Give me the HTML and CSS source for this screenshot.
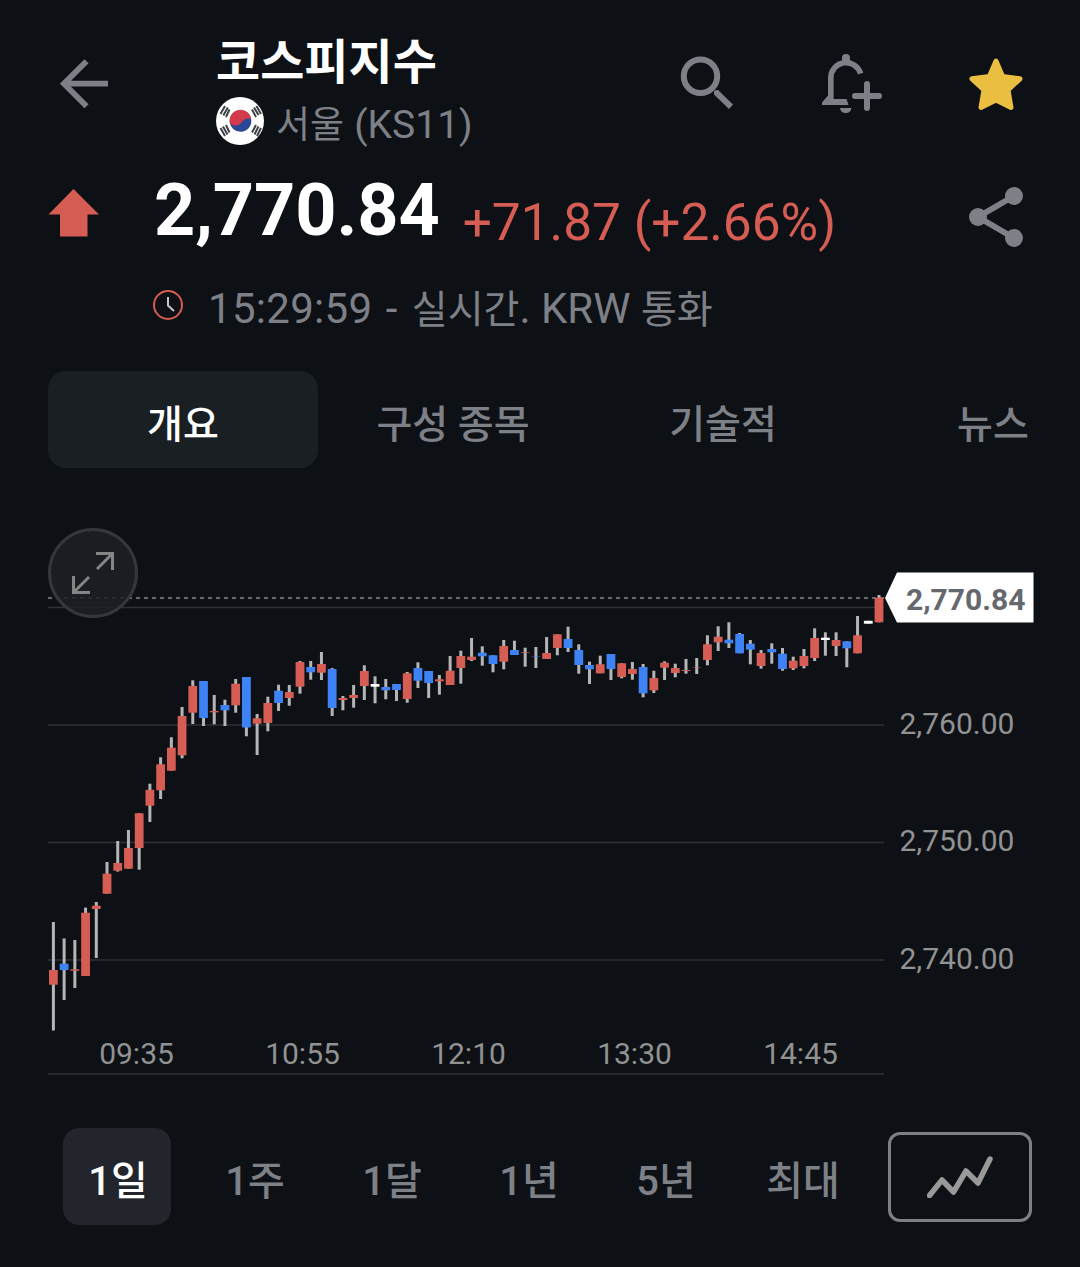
FILE: index.html
```html
<!DOCTYPE html>
<html lang="ko">
<head>
    <meta charset="UTF-8">
    <meta name="viewport" content="width=device-width, initial-scale=1.0">
    <title>코스피지수</title>
    <link rel="stylesheet" href="styles.css">
</head>
<body>
    <!-- 상단 바 -->
    <header class="header">
        <svg class="icon-back" viewBox="0 0 50 50">
            <path d="M48 24.7H5M26.500 2.200 4 24.700 26.500 47.200" fill="none" stroke="#7d8087" stroke-width="5.800"/>
        </svg>
        <div class="title-box">
            <h1>코스피지수</h1>
            <div class="market">
                <svg class="flag" viewBox="0 0 48 48">
                    <circle cx="24" cy="24" r="24" fill="#fff"/>
                    <g transform="rotate(-3 24 24)">
                        <circle cx="24.500" cy="24" r="10.800" fill="#2b4795"/>
                        <path d="M13.900 26A10.800 10.800 0 1 1 35.200 23C32 21 28 22 25.500 25.500S17 29 13.900 26Z" fill="#d33a4b"/>
                    </g>
                    <g stroke="#3f4246" stroke-width="2">
                        <path d="M4.500 17 9 9M7.300 18.500 11.800 10.500M10 20 13.500 12.500"/>
                        <path d="M36 12.500 40 20M38 10.500 42.500 18M40.500 9 45 17"/>
                        <path d="M4.500 31 9 39M7 29.500 11.500 37.500M10 28 13.500 35.500"/>
                        <path d="M36 35.500 40 28M38.500 37.500 42.500 29.500M41 39 45 31"/>
                    </g>
                </svg>
                <span class="market-name">서울 <span class="symbol">(KS11)</span></span>
            </div>
        </div>
        <div class="actions">
            <svg class="icon-search" viewBox="0 0 54 54">
                <circle cx="20.500" cy="20.300" r="16.700" fill="none" stroke="#7d8087" stroke-width="6"/>
                <path d="M34 35.500Q34.500 33.500 38 34L53 48.500 49 53 34.500 39Q33.500 37 34 35.500Z" fill="#7d8087"/>
            </svg>
            <svg class="icon-bell" viewBox="0 0 60 60">
                <path d="M8.800 47V24A15.200 15.200 0 0 1 38.600 19.600" fill="none" stroke="#7d8087" stroke-width="5.600"/>
                <path d="M20 9V4a4 4 0 0 1 8 0V9ZM18 54H29.500A5.800 5.800 0 0 1 18 54Z" fill="#7d8087"/>
                <path d="M6 41.500 11.600 45H24.500L26.500 51H0V48.500Z" fill="#7d8087"/>
                <path d="M45 30V54M33 42H57" fill="none" stroke="#7d8087" stroke-width="6" stroke-linecap="round"/>
            </svg>
            <svg class="icon-star" viewBox="0 0 54 54">
                <path d="M27 3 33.600 18.500 51 20.800 39 32 42 49.500 27 42 12 49.500 15 32 3 20.800 20.400 18.500Z" fill="#eabe41" stroke="#eabe41" stroke-width="5" stroke-linejoin="round"/>
            </svg>
        </div>
    </header>

    <!-- 현재가 -->
    <section class="quote">
        <svg class="icon-up" viewBox="0 0 50 48">
            <path d="M25 0 50.500 25.500H39V47.500H11.500V25.500H0Z" fill="#d65d53"/>
        </svg>
        <span class="price">2,770.84</span>
        <span class="change">+71.87 (+2.66%)</span>
        <svg class="icon-share" viewBox="0 0 54 60">
            <path d="M45 9 9 30 45 51" fill="none" stroke="#7d8087" stroke-width="6"/>
            <circle cx="45" cy="9" r="9" fill="#7d8087"/>
            <circle cx="9" cy="30" r="9" fill="#7d8087"/>
            <circle cx="45" cy="51" r="9" fill="#7d8087"/>
        </svg>
    </section>
    <div class="status">
        <svg class="icon-clock" viewBox="0 0 30 30">
            <circle cx="15" cy="15" r="14" fill="none" stroke="#d65d53" stroke-width="2"/>
            <path d="M15 7V15.500L21 21" fill="none" stroke="#c4c6c8" stroke-width="2"/>
        </svg>
        <span class="status-text"><span class="clock">15:29:59</span> <span class="dash">-</span> <span class="ko">실시간</span>. KRW <span class="ko">통화</span></span>
    </div>

    <!-- 탭 -->
    <nav class="tabs">
        <a class="tab active">개요</a>
        <a class="tab">구성 종목</a>
        <a class="tab">기술적</a>
        <a class="tab">뉴스</a>
    </nav>

    <!-- 차트 -->
    <section class="chart-box">
        <svg id="chart" class="chart" viewBox="0 508 1080 580">
            <g class="grid">
                <path d="M48 607.500H884M48 725H884M48 842.500H884M48 960H884M48 1074H884"/>
            </g>
            <path class="last-line" d="M48 598H884"/>
            <g id="candles"></g>
            <g class="axis">
                <text x="899.500" y="734">2,760.00</text>
                <text x="899.500" y="851">2,750.00</text>
                <text x="899.500" y="969">2,740.00</text>
            </g>
            <g class="axis time">
                <text x="136.500" y="1064">09:35</text>
                <text x="302.500" y="1064">10:55</text>
                <text x="468.500" y="1064">12:10</text>
                <text x="634.500" y="1064">13:30</text>
                <text x="800.500" y="1064">14:45</text>
            </g>
            <path d="M885 598 897 572.500H1033.500V622.500H897Z" fill="#fff"/>
            <text class="last-price" x="906" y="610">2,770.84</text>
        </svg>
        <button class="expand">
            <svg viewBox="0 0 42 42">
                <path d="M24 1.500H40.500V18M40.500 1.500 25 17M1.500 24V40.500H18M1.500 40.500 17 25" fill="none" stroke="#858585" stroke-width="3"/>
            </svg>
        </button>
    </section>

    <!-- 기간 선택 -->
    <nav class="ranges">
        <a class="range active">1일</a>
        <a class="range">1주</a>
        <a class="range">1달</a>
        <a class="range">1년</a>
        <a class="range">5년</a>
        <a class="range">최대</a>
        <button class="chart-type">
            <svg viewBox="0 0 66 42">
                <path d="M2.500 39.500 15 24 26.500 36 39 15 51 27 63 3" fill="none" stroke="#999" stroke-width="5.500" stroke-linecap="round" stroke-linejoin="round"/>
            </svg>
        </button>
    </nav>

    <script src="chart.js"></script>
</body>
</html>
```
FILE: styles.css
```css
* {
    box-sizing: border-box;
}

body {
    margin: 0;
    width: 1080px;
    height: 1267px;
    overflow: hidden;
    background: #0d1014;
    color: #7d8087;
    font-family: Roboto, 'Noto Sans CJK KR', sans-serif;
}

svg {
    display: block;
    flex-shrink: 0;
}

button {
    margin: 0;
    padding: 0;
    background: none;
}

/* 상단 바 */
.header {
    display: flex;
    height: 160px;
    padding: 0 57px 0 60px;
}

.icon-back {
    width: 50px;
    height: 50px;
    margin-top: 59px;
}

.title-box {
    margin-left: 106px;
    padding-top: 33px;
}

h1 {
    margin: 0;
    font-size: 48px;
    font-weight: 700;
    line-height: 60px;
    color: #fff;
}

.market {
    display: flex;
    align-items: center;
    gap: 12px;
    margin-top: 4px;
    height: 48px;
    font-size: 37px;
    line-height: 48px;
}

.market-name {
    padding-top: 8px;
}

.symbol {
    margin-left: 1px;
    font-size: 39px;
}

.flag {
    width: 48px;
    height: 48px;
}

.actions {
    display: flex;
    margin-left: auto;
    padding-top: 54px;
}

.icon-search {
    width: 54px;
    height: 54px;
    margin: 2px 88px 0 0;
}

.icon-bell {
    width: 60px;
    height: 60px;
    margin-right: 87px;
}

.icon-star {
    width: 54px;
    height: 54px;
    margin-top: 4px;
}

/* 현재가 */
.quote {
    display: flex;
    align-items: flex-start;
    height: 120px;
    padding: 0 57px 0 48px;
}

.icon-up {
    width: 51px;
    height: 48px;
    margin-top: 29px;
}

.price {
    margin-left: 55px;
    padding-top: 9px;
    font-size: 72px;
    font-weight: 700;
    line-height: 84px;
    letter-spacing: -0.1px;
    color: #fff;
}

.change {
    margin-left: 23px;
    padding-top: 33px;
    font-size: 51.4px;
    line-height: 60px;
    color: #d65d53;
    white-space: nowrap;
}

.icon-share {
    width: 54px;
    height: 60px;
    margin: 27px 0 0 auto;
}

.status {
    display: flex;
    align-items: flex-start;
    height: 91px;
    padding-left: 153px;
    font-size: 42px;
    line-height: 50px;
}

.status-text {
    padding-top: 4px;
}

.clock {
    letter-spacing: 0.3px;
}

.dash {
    margin: 0 4px 0 3px;
}

.ko {
    font-size: 39px;
}

.icon-clock {
    width: 30px;
    height: 30px;
    margin: 10px 25px 0 0;
}

/* 탭 */
.tabs {
    display: flex;
    height: 97px;
    padding-left: 48px;
    font-size: 39px;
    font-weight: 500;
    line-height: 108px;
    text-align: center;
}

.tab {
    width: 270px;
    flex-shrink: 0;
}

.tab.active {
    border-radius: 18px;
    background: #1a1f23;
    color: #fff;
}

/* 차트 */
.chart-box {
    position: relative;
    margin-top: 40px;
    height: 580px;
}

.chart {
    width: 1080px;
    height: 580px;
}

.grid {
    stroke: #2e3135;
    stroke-width: 1.5;
}

.last-line {
    stroke: #85878a;
    stroke-width: 1.5;
    stroke-dasharray: 4 4;
}

.wick {
    fill: #b5b5b5;
}

.up {
    fill: #d65d53;
}

.down {
    fill: #3d83f5;
}

.flat {
    fill: #fff;
}

.axis {
    font-size: 30px;
    fill: #929292;
}

.time {
    text-anchor: middle;
}

.last-price {
    font-size: 30px;
    font-weight: 700;
    fill: #65686e;
}

.expand {
    position: absolute;
    top: 20px;
    left: 48px;
    display: flex;
    align-items: center;
    justify-content: center;
    width: 90px;
    height: 90px;
    border: 3px solid #34373b;
    border-radius: 50%;
    background: rgba(29, 32, 36, 0.85);
}

.expand svg {
    width: 42px;
    height: 42px;
}

/* 기간 선택 */
.ranges {
    display: flex;
    margin-top: 40px;
    padding-left: 63px;
    gap: 29px;
    font-size: 40px;
    font-weight: 500;
    line-height: 108px;
    text-align: center;
}

.range {
    width: 108px;
    height: 97px;
    padding-left: 2px;
}

.range.active {
    border-radius: 16px;
    background: #22252c;
    color: #fff;
}

.chart-type {
    display: flex;
    align-items: center;
    justify-content: center;
    width: 144px;
    height: 90px;
    margin: 4px 0 0 3px;
    border: 3px solid #7d8087;
    border-radius: 12px;
}

.chart-type svg {
    width: 66px;
    height: 42px;
}
```
FILE: chart.js
```js
// [방향, 고가, 몸통 위, 몸통 아래, 저가]
const candles = [
    ['up', 922, 970, 984.7, 1030.5],
    ['down', 938.5, 963.7, 970, 1000],
    ['up', 940, 969.3, 970.8, 988],
    ['up', 907.6, 912.7, 976, 976],
    ['up', 902, 905.7, 909, 958],
    ['up', 862, 873.7, 893.7, 893.7],
    ['up', 841, 863, 870.7, 871.6],
    ['up', 830, 848, 868.7, 868.7],
    ['up', 813.3, 813.3, 848, 869.7],
    ['up', 783.7, 789.8, 805.7, 822],
    ['up', 757.3, 764.3, 790.3, 799],
    ['up', 737.3, 747.7, 770.7, 770.7],
    ['up', 707, 716, 755.3, 758.3],
    ['up', 680.3, 686, 712.7, 724],
    ['down', 681, 681, 718, 726],
    ['up', 695, 711, 712.3, 724.3],
    ['down', 699.7, 705, 710.3, 726],
    ['up', 679, 683.7, 705.3, 712.7],
    ['down', 677, 677, 727.5, 736.3],
    ['up', 714, 718.3, 723.7, 755],
    ['up', 696.7, 703, 723, 731.3],
    ['down', 684.7, 690.7, 703, 711],
    ['up', 685, 692, 698, 705.7],
    ['up', 661, 662, 686.7, 693.7],
    ['down', 661, 667, 672.3, 679.7],
    ['up', 652, 664, 672.7, 680],
    ['down', 668, 669, 708, 716],
    ['up', 696, 698, 700, 710.3],
    ['up', 685, 695, 698, 707.7],
    ['up', 665.3, 671, 686, 700],
    ['flat', 676.3, 684, 686.7, 703.3],
    ['down', 679, 687, 690.3, 699.3],
    ['down', 684, 684, 690, 701],
    ['up', 672, 673.3, 699, 702.7],
    ['down', 662.3, 668, 680.7, 688],
    ['down', 671, 671, 683, 698],
    ['up', 675, 679.3, 681.3, 694.7],
    ['up', 656, 670.7, 685, 685],
    ['up', 650.7, 656, 668, 683.7],
    ['up', 638, 656.7, 660, 661],
    ['down', 646.3, 652.7, 656.3, 665.7],
    ['down', 655.3, 655.3, 664, 672.3],
    ['up', 640, 646, 661.7, 669.3],
    ['down', 640.7, 650, 655, 655],
    ['up', 647.7, 652.1, 652.8, 666.7],
    ['down', 647, 656.1, 656.5, 668],
    ['up', 637, 653, 659, 659],
    ['up', 634.3, 634.3, 648, 655.3],
    ['down', 626.7, 639, 648, 652],
    ['down', 644.3, 650, 665, 673.7],
    ['down', 661.7, 665, 669.3, 684],
    ['up', 655.7, 664.3, 673.3, 673.3],
    ['down', 654, 654, 669, 680],
    ['up', 663.3, 663.3, 677, 678.3],
    ['up', 662, 669, 674, 679.7],
    ['down', 664, 667, 693.3, 697.3],
    ['up', 670.7, 678, 690.3, 693],
    ['up', 661.3, 662.7, 667.7, 680],
    ['up', 663.7, 668, 673, 677.3],
    ['up', 659, 670, 671, 673.7],
    ['up', 658, 667.1, 667.5, 674],
    ['up', 635.3, 644.3, 660, 665.3],
    ['up', 626.3, 636.7, 642.3, 651],
    ['down', 622.3, 639.7, 643.3, 648],
    ['down', 633, 634, 653.3, 653.3],
    ['down', 640, 643.7, 649.7, 664.3],
    ['up', 650, 653, 666, 668.7],
    ['down', 643.3, 649, 652.3, 663.7],
    ['down', 648, 653.7, 669, 670.7],
    ['up', 656.7, 660.7, 668.3, 670],
    ['up', 649, 656, 666, 668.3],
    ['up', 628.3, 638, 658, 661],
    ['flat', 632.3, 637.7, 640, 655.7],
    ['up', 632.3, 640, 646, 656],
    ['down', 641.3, 641.3, 648.3, 667.3],
    ['up', 616, 635.3, 653.3, 653.3],
    ['flat', 620.8, 620.8, 623.7, 623.7],
    ['up', 595, 597.7, 622.3, 622.3]
];

const layer = document.getElementById('candles');

function addRect(cls, x, y, width, height) {
    const rect = document.createElementNS('http://www.w3.org/2000/svg', 'rect');
    rect.setAttribute('class', cls);
    rect.setAttribute('x', x);
    rect.setAttribute('y', y);
    rect.setAttribute('width', width);
    rect.setAttribute('height', height);
    layer.appendChild(rect);
}

candles.forEach(function(candle, i) {
    const x = 53.4 + i * 10.722;
    addRect('wick', x - 1.5, candle[1], 3, candle[4] - candle[1]);
    addRect(candle[0], x - 4.4, candle[2], 8.8, candle[3] - candle[2]);
});
```
